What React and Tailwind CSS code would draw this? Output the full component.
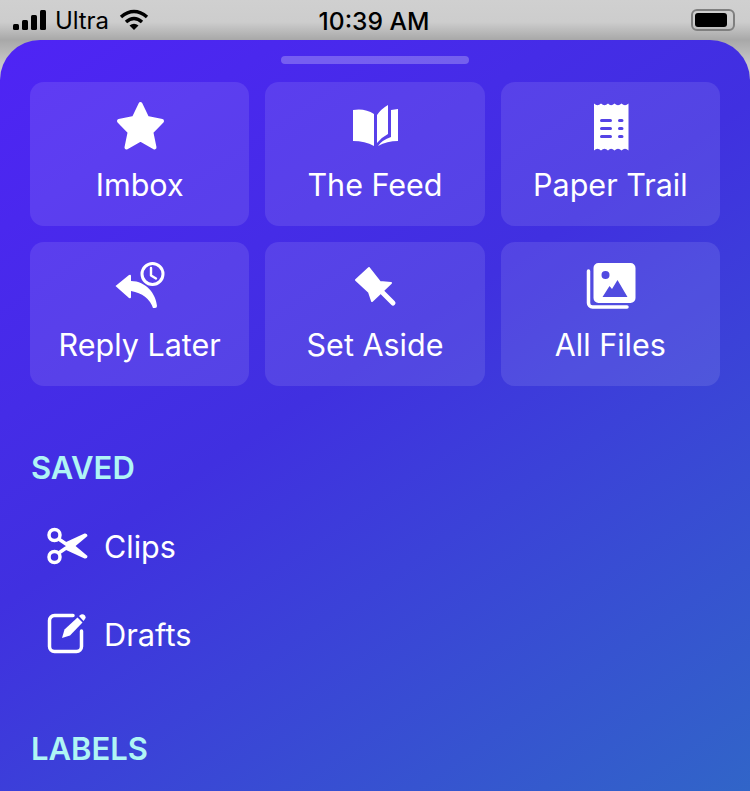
const font = { fontFamily: "Inter, 'Liberation Sans', sans-serif" };

function IconBox({ children }) {
  return (
    <svg width="60" height="52" viewBox="0 0 60 52" fill="white" className="block shrink-0">
      {children}
    </svg>
  );
}

const Star = () => (
  <IconBox>
    <path
      d="M30.5 4L37.200 18L52 21L41.300 32L44.500 47.500L30.500 39.500L16.500 47.500L19.700 32L9 21L23.800 18Z"
      stroke="white"
      strokeWidth="4"
      strokeLinejoin="round"
    />
  </IconBox>
);

const Book = () => (
  <IconBox>
    <path d="M8 10Q20 8 29 14V46Q20 41 8 41Z" />
    <path d="M32 15Q36 9 43 5V34Q37 37 32 43Z" />
    <path d="M46 10L53 9V41Q42 41 33 46Q37 40 46 37Z" />
  </IconBox>
);

const Receipt = () => (
  <IconBox>
    <path
      fillRule="evenodd"
      d="M14 3.500Q17.500 7 21 3.500Q24.500 7 28 3.500Q31 7 34.500 3.500Q38 7 41.500 3.500Q45 7 48.500 3.500V50.500Q45 47 41.500 50.500Q38 47 34.500 50.500Q31 47 28 50.500Q24.500 47 21 50.500Q17.500 47 14 50.500ZM21.500 19A1.500 1.500 0 0 0 21.500 22H30.500A1.500 1.500 0 0 0 30.500 19ZM39.500 19A1.500 1.500 0 0 0 39.500 22H42A1.500 1.500 0 0 0 42 19ZM21.500 27A1.500 1.500 0 0 0 21.500 30H30.500A1.500 1.500 0 0 0 30.500 27ZM39.500 27A1.500 1.500 0 0 0 39.500 30H42A1.500 1.500 0 0 0 42 27ZM21.500 35A1.500 1.500 0 0 0 21.500 38H30.500A1.500 1.500 0 0 0 30.500 35ZM39.500 35A1.500 1.500 0 0 0 39.500 38H42A1.500 1.500 0 0 0 42 35Z"
    />
  </IconBox>
);

const ReplyLater = () => (
  <IconBox>
    <circle cx="42.5" cy="14" r="10.5" fill="none" stroke="white" strokeWidth="3" />
    <path d="M41 8V15.500L46 18.500" fill="none" stroke="white" strokeWidth="2.4" strokeLinecap="round" strokeLinejoin="round" />
    <path d="M5.500 26L19 15Q21 14 21 16V21C36 21 46 34 47 46Q47 48 45 48H43Q38 34 21 31V37Q21 39 19 38Z" />
  </IconBox>
);

const Pin = () => (
  <IconBox>
    <path
      fillRule="evenodd"
      stroke="white"
      strokeWidth="2"
      strokeLinejoin="round"
      d="M24 8L35 22L46 23L27 41L24 32L11 20ZM16 19.500L15 21L22.500 25.500L23.500 24Z"
    />
    <path d="M37 32L48 43" stroke="white" strokeWidth="5" strokeLinecap="round" />
  </IconBox>
);

const Files = () => (
  <IconBox>
    <path
      fillRule="evenodd"
      d="M18.500 3H50.500A5 5 0 0 1 55.500 8V38A5 5 0 0 1 50.500 43H18.500A5 5 0 0 1 13.500 38V8A5 5 0 0 1 18.500 3ZM25.500 11A4 4 0 1 0 25.500 19A4 4 0 1 0 25.500 11ZM22.500 37L29.500 26L32 29L37.500 20L47.500 37Z"
    />
    <path d="M8.500 11V43A4 4 0 0 0 12.500 47H47" fill="none" stroke="white" strokeWidth="3.500" strokeLinecap="round" />
  </IconBox>
);

const Scissors = () => (
  <svg width="44" height="40" viewBox="0 0 44 40" fill="white" className="block shrink-0">
    <circle cx="7.500" cy="9" r="5.500" fill="none" stroke="white" strokeWidth="3.500" />
    <circle cx="7.500" cy="31" r="5.500" fill="none" stroke="white" strokeWidth="3.500" />
    <path d="M11 12.500L22 20M11 27.500L22 20" stroke="white" strokeWidth="3.500" />
    <path d="M18 16.500L37.500 7.500Q40.500 7 40.500 10L25 23Z" />
    <path d="M18 23.500L37.500 32.500Q40.500 33 40.500 30L25 17Z" />
  </svg>
);

const Drafts = () => (
  <svg width="44" height="42" viewBox="0 0 44 42" fill="white" className="block shrink-0">
    <path
      d="M26 2.500H7.500A5 5 0 0 0 2.500 7.500V33.500A5 5 0 0 0 7.500 38.500H29.500A5 5 0 0 0 34.500 33.500V18"
      fill="none"
      stroke="white"
      strokeWidth="3.500"
      strokeLinecap="round"
    />
    <path d="M15 25L17.500 16.500L30.500 4.500L35.500 9.500L23 22.500Z" />
    <path d="M32 3L34 1.500Q36 0.500 38 2.500Q39.500 4.500 38 6L36.500 8Z" />
  </svg>
);

const cards = [
  ["Imbox", Star],
  ["The Feed", Book],
  ["Paper Trail", Receipt],
  ["Reply Later", ReplyLater],
  ["Set Aside", Pin],
  ["All Files", Files],
];

export default function App() {
  return (
    <div
      style={font}
      className="w-[750px] h-[791px] overflow-hidden flex flex-col bg-[linear-gradient(180deg,#d0d0d0_0px,#cdcdcd_22px,#a8a8a8_40px,#c8c8c8_64px,#c8c8c8_100%)]"
    >
      <div className="h-[40px] shrink-0 grid grid-cols-3 items-center pl-[13px] pr-[15px] text-black">
        <div className="flex items-center">
          <svg width="34" height="20" viewBox="0 0 34 20" fill="black" className="block">
            <rect x="0" y="14" width="6" height="6" rx="1.500" />
            <rect x="9" y="10" width="6" height="10" rx="1.500" />
            <rect x="18" y="5" width="6" height="15" rx="1.500" />
            <rect x="27" y="0" width="6" height="20" rx="1.500" />
          </svg>
          <span className="ml-[8px] text-[24px] leading-none tracking-[-0.1px] translate-y-px">Ultra</span>
          <svg width="30" height="22" viewBox="0 0 30 22" fill="none" stroke="black" className="block ml-[10px]">
            <path d="M2 8Q15 -3 28 8" strokeWidth="3.500" />
            <path d="M7 13Q15 6 23 13" strokeWidth="3.500" />
            <path d="M15 21L10.500 16.500Q15 13 19.500 16.500Z" fill="black" stroke="none" />
          </svg>
        </div>
        <div className="text-center text-[24.600px] leading-none font-medium translate-y-px">10:39 AM</div>
        <div className="flex justify-end items-center">
          <div className="w-[44px] h-[22px] rounded-[6px] border-2 border-[#7f7f7f] p-[2px]">
            <div className="w-[32px] h-full rounded-[3px] bg-black" />
          </div>
        </div>
      </div>

      <div className="flex-1 rounded-t-[40px] px-[30px] pt-[16px] bg-[linear-gradient(146deg,#4f24f5_0%,#4030e0_45%,#3165c8_100%)]">
        <div className="w-[188px] h-[8px] mx-auto rounded-full bg-white/25" />
        <div className="mt-[18px] grid grid-cols-3 gap-[16px]">
          {cards.map(([label, Icon]) => (
            <div
              key={label}
              className="h-[144px] rounded-[14px] bg-white/10 flex flex-col items-center pt-[18px] text-white"
            >
              <Icon />
              <span className="mt-[15px] text-[30.500px] leading-[36px]">{label}</span>
            </div>
          ))}
        </div>
        <div className="mt-[64px] ml-px text-[31px] leading-[36px] font-semibold text-[#b0f5f5]">SAVED</div>
        <div className="mt-[40px] flex items-center h-[40px] ml-[17px] text-white">
          <Scissors />
          <span className="ml-[13px] text-[30.500px] leading-none translate-y-px">Clips</span>
        </div>
        <div className="mt-[47px] flex items-center h-[42px] ml-[17px] text-white">
          <Drafts />
          <span className="ml-[13px] text-[30.800px] leading-none translate-y-px">Drafts</span>
        </div>
        <div className="mt-[76px] ml-px text-[31px] leading-[36px] font-semibold text-[#b0f5f5]">LABELS</div>
      </div>
    </div>
  );
}
